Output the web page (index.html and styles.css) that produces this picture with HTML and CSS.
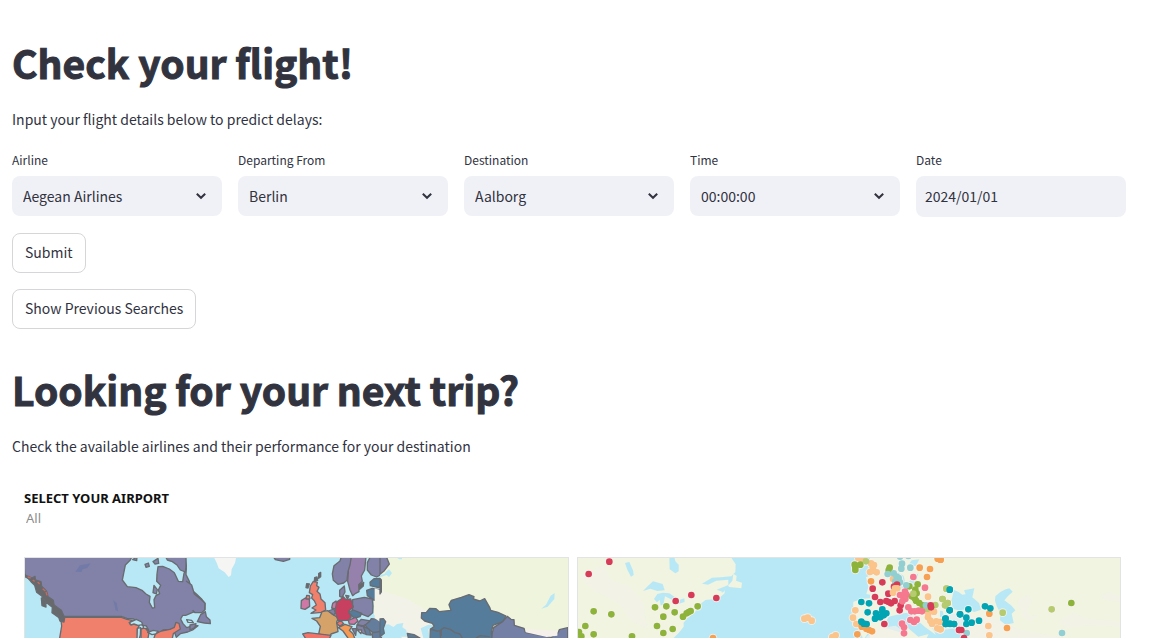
FILE: index.html
```html
<!DOCTYPE html>
<html lang="en">
<head>
<meta charset="utf-8">
<meta name="viewport" content="width=device-width, initial-scale=1">
<title>Check your flight!</title>
<link rel="stylesheet" href="styles.css">
</head>
<body>
<main class="page">
  <section class="block">
    <h1 class="title">Check your flight!</h1>
    <p class="lead">Input your flight details below to predict delays:</p>
    <form class="form">
      <div class="fields">
        <div class="field">
          <label class="label" for="airline">Airline</label>
          <div class="picker">
            <select class="control" id="airline"><option>Aegean Airlines</option></select>
            <svg class="chevron" viewBox="0 0 12 8" aria-hidden="true"><path d="M1.8 1.7 6 5.8l4.2-4.1"/></svg>
          </div>
        </div>
        <div class="field">
          <label class="label" for="from">Departing From</label>
          <div class="picker">
            <select class="control" id="from"><option>Berlin</option></select>
            <svg class="chevron" viewBox="0 0 12 8" aria-hidden="true"><path d="M1.8 1.7 6 5.8l4.2-4.1"/></svg>
          </div>
        </div>
        <div class="field">
          <label class="label" for="to">Destination</label>
          <div class="picker">
            <select class="control" id="to"><option>Aalborg</option></select>
            <svg class="chevron" viewBox="0 0 12 8" aria-hidden="true"><path d="M1.8 1.7 6 5.8l4.2-4.1"/></svg>
          </div>
        </div>
        <div class="field">
          <label class="label" for="time">Time</label>
          <div class="picker">
            <select class="control" id="time"><option>00:00:00</option></select>
            <svg class="chevron" viewBox="0 0 12 8" aria-hidden="true"><path d="M1.8 1.7 6 5.8l4.2-4.1"/></svg>
          </div>
        </div>
        <div class="field">
          <label class="label" for="date">Date</label>
          <input class="control control-date" id="date" type="text" value="2024/01/01">
        </div>
      </div>
      <button class="button" type="submit">Submit</button>
      <button class="button" type="button">Show Previous Searches</button>
    </form>
  </section>

  <section class="block">
    <h1 class="title">Looking for your next trip?</h1>
    <p class="lead">Check the available airlines and their performance for your destination</p>
    <div class="report">
      <div class="filter">
        <label class="filter-label" for="airport">SELECT YOUR AIRPORT</label>
        <select class="filter-select" id="airport"><option>All</option></select>
      </div>
      <div class="maps">
        <svg class="map map-regions" viewBox="75 24 1629 240" preserveAspectRatio="xMinYMin slice" role="img" aria-label="Countries map">
          <g class="shapes">
            <path class="violet" d="M70 15H558L556 25 559 48 558 74 568 94 575 120 590 133 604 146 615 160V179L600 181 578 187 557 196 548 196 542 207 549 221 560 233 577 228 594 227 578 240 563 246 541 251 529 262 521 240 515 238 489 240 478 251 463 252 446 243 437 232 421 221 401 207 381 205 364 199H190L181 183 165 169 158 160 149 153 139 136 122 112 104 94 91 88 75 80Z"/>
            <path class="coral" d="M188 202H364L381 208 397 211 388 218 390 222 408 224 418 226 412 238 413 270H178L185 228 183 211Z"/>
            <path class="coral" d="M423 270V237L434 233 447 248 443 270ZM460 270 466 252 484 243 510 238 523 232 528 217 537 220 541 237 527 246 520 251 516 270Z"/>
            <path class="water" d="M398 15 391 30 376 45 371 70 367 90 382 110 408 113 426 121 438 132 450 139 448 157 457 174 464 173 462 149 468 137 479 131 475 120 482 106 470 94 471 72 474 50 488 49 508 57 523 68 535 94 548 95 552 70 558 57 542 45 531 35 520 15Z"/>
            <path class="violet" d="M398 29 411 20 410 32ZM435 43 445 39 448 49 438 52ZM459 35 474 25 476 40 465 42ZM494 15 502 30 517 35 531 45 541 60 556 66 558 48 558 15ZM462 106 472 119 469 132 459 128Z"/>
            <path class="water" d="M388 218 409 208 425 216 428 224 414 226 402 222 393 225ZM429 226 439 228 446 240 439 235 431 235ZM412 235 422 233 421 255 417 270H411ZM443 247 460 241 475 244 467 252 456 254ZM560 209 575 211 580 218 564 217Z"/>
            <path class="rock" d="M76 75 96 84 105 79 106 90 123 95 125 109 140 124 144 140 160 151 162 165 184 181 194 203 192 216 180 213 176 202 156 188 157 172 137 156 126 139 110 127 104 106 93 95ZM124 144 137 154 138 171 126 167ZM170 191 188 204 181 211Z"/>
            <path class="spark" d="M83 81 92 84M98 90 104 94M113 96l6 6M128 116l8 7M138 126l3 10"/>
            <path class="lake" d="M226 65 240 46 272 40 262 54 248 58 244 66ZM339 150 350 158 355 185 346 180 344 167Z"/>
          </g>
          <g class="shapes" transform="translate(570)">
            <path class="violet" d="M22 215 32 194 46 185 49 200 60 210 61 221 43 219ZM0 225 18 221 14 233 0 240ZM250 20 256 29 280 34 299 28V20Z"/>
            <path class="violet-flat" d="M-12 93 5 105 13 132 35 150 45 160 44 180 35 188 15 188 8 181-12 184Z"/>
            <path class="rock-line" d="M-12 93 5 105 13 132 35 150 45 160 44 180 35 188 15 188 8 181"/>
            <path class="ice" d="M71 20 80 38 86 55 104 67 116 81 123 76 125 58 135 39 139 20Z"/>
            <path class="land" d="M598 25 588 55 575 82 574 97 568 130 552 140 552 194 570 203H1110V15H598Z"/>
            <path class="plum" d="M481 20 473 45 475 66 473 94 480 120 488 137 497 130 507 125 506 104 517 94 514 78 524 60 528 20Z"/>
            <path class="violet" d="M454 20 450 33 432 47 427 72 430 91 444 103 461 99 471 91 474 64 480 45 484 20ZM541 20 532 38 532 60 544 75 560 81 579 70 597 48 602 27 595 20Z"/>
            <path class="violet" d="M449 121 463 108 465 126 456 142 449 139ZM467 136l10 2-5 9Z"/>
            <path class="blue" d="M540 97 552 86 574 85 574 108 566 113 541 107ZM530 121 547 115 571 120 568 136 553 151 532 137Z"/>
            <path class="coral" d="M361 108 370 94 382 97 380 107 387 112 381 124 390 132 393 147 405 158 407 180 395 187 363 190 378 180 366 174 379 165 373 152 365 144 368 134 358 128Z"/>
            <path class="rose" d="M334 152 346 144 358 148 359 169 345 178 333 175Z"/>
            <path class="coral" d="M350 136 358 137 360 146 348 147Z"/>
            <path class="rock" d="M386 71 392 67 392 80 386 85ZM374 83 381 81 383 91 373 95ZM350 101 358 102 354 114 348 113ZM509 104 521 97 520 108 509 118Z"/>
            <path class="sand" d="M366 205 389 203 396 185 413 182 424 190 445 204 440 216 444 245 423 252 418 262 386 252 391 229 380 213Z"/>
            <path class="violet" d="M415 183 431 177 437 188 431 195ZM488 149 523 142 547 147 549 168 548 188 534 200 510 190 487 181Z"/>
            <path class="rose" d="M428 160 438 153 441 169 434 177 425 174Z"/>
            <path class="crimson" d="M440 156 451 149 460 140 468 149 482 147 490 171 476 184 484 201 475 211 445 212 440 201 435 184Z"/>
            <path class="blue" d="M476 186 490 180 515 190 510 200 492 205Z"/>
            <path class="rose" d="M475 211 497 202 504 213 493 223 478 222Z"/>
            <path class="red" d="M440 220 452 211 461 221 449 229ZM338 252 354 248 423 256 416 270H350Z"/>
            <path class="orange" d="M445 233 465 223 486 230 478 241 489 251 496 270H478L459 243Z"/>
            <path class="violet" d="M504 218 514 208 542 213 530 223 515 229 503 225ZM501 224 521 228 534 240 530 253 519 250 500 235 486 236 497 256Z"/>
            <path class="cream" d="M502 240 515 240 513 251Z"/>
            <path class="slate" d="M537 216 544 206 573 209 586 226 580 243 550 248 534 236 525 225ZM520 230 537 237 543 255 529 254ZM546 247 580 244 573 266 548 265Z"/>
            <path class="coast" d="M580 61 592 50 608 61V79H590Z"/>
          </g>
          <g class="shapes" transform="translate(1140)">
            <path class="land" d="M0 20H570V270H140L125 262 100 252 83 233 68 218 28 221 12 203 0 210Z"/>
            <path class="land-warm" d="M-16 115 85 148 120 170 170 200 198 270H75L0 215-16 205Z"/>
            <path class="sea" d="M0 226 26 223 40 231 51 222 70 219 67 232 78 239 82 253 110 260H0ZM122 235 145 224 163 224 159 233 145 238 149 264H130ZM18 65 27 58 36 69 27 81 20 75 0 82V75L13 72ZM52 24H66V28H58ZM484 176 498 164 512 137 524 129 523 147 503 170Z"/>
            <path class="violet" d="M0 20H19L28 42 13 62 0 73Z"/>
            <path class="blue" d="M0 85 4 90 4 126 0 132ZM0 207 10 206 17 215 10 235 13 250 0 260ZM82 250 102 254 120 264H85Z"/>
            <path class="blue" d="M125 188 139 187 149 175 168 176 178 185 213 181 207 164 214 151 244 142 267 134 282 140 280 147 299 153 314 146 329 172 332 181 354 187 378 198 369 215 339 226 334 247 338 270H150L151 238 163 229 157 220 134 213 124 204Z"/>
            <path class="rock-line" d="M151 237 171 243 180 242 182 265M178 243 192 233 211 238 225 248 240 252 249 268M184 239 183 258M280 270 300 257 329 260"/>
            <path class="indigo" d="M369 214 382 199 393 208 402 209 403 226 432 235 436 247 463 252 514 262 534 248 538 239 563 233V270H335L337 248 341 233Z"/>
            <path class="cream-flat" d="M436 237 500 240 533 243 532 257 500 261 437 247Z"/>
          </g>
        </svg>

        <svg class="map map-airports" viewBox="1734 24 1632 240" preserveAspectRatio="xMinYMin slice" role="img" aria-label="Airports map">
          <g transform="translate(1710)">
            <path class="haze" d="M30 80 100 45 120 90 180 110 220 160 230 235 180 210 150 160 70 120Z"/>
            <path class="sea" d="M482 20 497 43 496 66 484 79 451 82 426 83 396 101 414 104 439 92 475 89 475 105 440 119 457 125 446 142 430 148 406 150 385 167 375 187 354 202 341 218 341 230 326 249 305 270H900V20ZM165 39 178 36 189 61 191 75 183 80 172 59ZM298 20H313L316 34 326 44V64L316 70 299 58ZM219 123 236 106 249 94 278 102 284 121 262 123 241 116ZM252 147 262 132 278 128 298 130 311 139 327 150 343 145 344 156 326 161 300 146 285 139 280 165 272 166 269 149 261 157Z"/>
            <path class="land" d="M474 107 487 92 490 71 500 78 498 92 516 98 514 115 478 111ZM443 134 460 126 464 121 464 130 451 141Z"/>
          </g>
          <g transform="translate(2280)">
            <path class="land" d="M310 270 300 240 278 220 280 155 310 146 330 145 334 135 319 132 325 111 318 82 335 74 352 98 370 102 396 88 406 63 429 26 640 20H1090V270H500L490 238 465 200 448 205 420 180 370 225 330 240Z"/>
            <path class="sea" d="M405 80 413 66 431 78 437 104 455 88 475 70 464 115 438 112 421 132 402 122ZM430 190 460 187 494 215 515 250 475 260 440 230 430 250 370 232 386 200ZM545 185 610 195 610 264H500L515 235 552 230ZM442 50 455 31 478 28 468 47Z"/>
            <path class="land" d="M448 190 469 188 510 221 528 255 495 231 465 205ZM510 178 555 178 565 235 536 240 513 215Z"/>
            <path class="haze" d="M320 260 345 236 407 227 425 240 418 270H315Z"/>
          </g>
          <g transform="translate(2820)">
            <path class="haze" d="M234 148 267 135 275 156 260 180 269 199 293 196 275 214 249 202 249 183 233 170ZM355 213 405 188 430 204 460 208 541 215V230L440 225 380 236ZM482 138 510 126 541 142V155L495 150Z"/>
            <path class="haze" d="M0 192 55 183 120 198 170 208 230 238 400 270H0Z"/>
            <path class="sea" d="M34 153 42 120 56 126 67 134 77 133 72 121 103 115 97 142 117 159 123 179 103 186 82 178 55 181 39 177ZM166 139 180 127 197 118 208 115 218 125 204 138 193 151 213 166 226 181 215 191 221 219 197 224 180 211 181 189 171 170 165 153ZM0 242 36 236 68 243 61 264H0ZM0 182 8 183 12 199 0 201Z"/>
          </g>
          <g id="dots"></g>
        </svg>
      </div>
    </div>
  </section>
</main>
<script src="map.js"></script>
</body>
</html>
```
FILE: styles.css
```css
* { box-sizing: border-box; }

body {
  margin: 0;
  background: #fff;
  color: #31333f;
  font-family: "Noto Sans CJK SC", "Open Sans", sans-serif;
  font-size: 14px;
  line-height: 24px;
}

.page { padding: 34px 24px 0 12px; }
.block + .block { padding-top: 32px; }

.title {
  margin: 0 0 17px;
  font-size: 39px;
  line-height: 56px;
  font-weight: 700;
  -webkit-text-stroke: 1px #31333f;
}

.lead { margin: 0; }

.form {
  display: flex;
  flex-direction: column;
  align-items: flex-start;
  gap: 16px;
  padding-top: 17px;
}

.fields {
  display: grid;
  grid-template-columns: repeat(5, minmax(0, 1fr));
  gap: 16px;
  width: 100%;
}

.label {
  display: block;
  margin-bottom: 4px;
  font-size: 12px;
  line-height: 24px;
}

.picker { position: relative; }

.control {
  display: block;
  width: 100%;
  height: 40px;
  padding: 0 32px 0 11px;
  border: 0;
  border-radius: 8px;
  background: #f0f1f6;
  color: inherit;
  font: inherit;
  appearance: none;
}

.control-date { height: 41px; padding: 0 9px 2px; }

.chevron {
  position: absolute;
  top: 16px;
  right: 15px;
  width: 12px;
  height: 8px;
  fill: none;
  stroke: #31333f;
  stroke-width: 2;
  pointer-events: none;
}

.button {
  height: 40px;
  padding: 0 12px 2px;
  border: 1px solid #d6d6d9;
  border-radius: 8px;
  background: #fff;
  color: inherit;
  font: inherit;
}

.report { padding: 31px 5px 0 12px; }

.filter {
  display: flex;
  flex-direction: column;
  align-items: flex-start;
  font-family: "Noto Sans", sans-serif;
}

.filter-label {
  color: #111;
  font-size: 13px;
  line-height: 19px;
  font-weight: 700;
}

.filter-select {
  height: 20px;
  padding: 0 2px;
  border: 0;
  background: none;
  color: #8c8c8c;
  font: inherit;
  font-size: 13px;
  line-height: 20px;
  appearance: none;
}

.maps {
  display: grid;
  grid-template-columns: repeat(2, minmax(0, 1fr));
  gap: 8px;
  padding-top: 29px;
}

.map {
  display: block;
  width: 100%;
  height: 81px;
  border: 1px solid #e2e4e4;
  border-bottom: 0;
}

.map-regions { background: #b8e8f5; }
.map-airports { background: #f0f4e1; }

.shapes path { stroke: #686b70; stroke-width: 4; stroke-linejoin: round; }
.shapes .water { fill: #b8e8f5; }
.shapes .violet { fill: #8282a8; }
.shapes .violet-flat { fill: #8282a8; stroke: none; }
.shapes .plum { fill: #9681ac; }
.shapes .indigo { fill: #7480a6; }
.shapes .blue { fill: #557c9b; }
.shapes .slate { fill: #647d9d; }
.shapes .coral { fill: #f0806c; }
.shapes .red { fill: #f47368; }
.shapes .rose { fill: #ce78a5; }
.shapes .crimson { fill: #c7405f; }
.shapes .sand { fill: #d5a369; }
.shapes .orange { fill: #f59a55; }
.shapes .cream { fill: #f0eee5; }
.shapes .rock { fill: #68696c; }
.shapes .rock-line { fill: none; }
.shapes .spark { fill: none; stroke: #c9685a; }
.shapes .lake { fill: #727ba8; stroke: none; }
.shapes .ice { fill: #f5f5f3; stroke: none; }
.shapes .cream-flat { fill: #f5f0ea; stroke: none; }
.shapes .coast, .shapes .sea { fill: #b8e8f5; stroke: none; }
.shapes .land { fill: #eff4dd; stroke: none; }
.shapes .land-warm { fill: #f3f2e8; stroke: none; }

.sea { fill: #b8e8f5; }
.land { fill: #f0f4e1; }
.haze { fill: #f4f1ea; opacity: 0.7; }

.halo { fill: #f8f3ee; opacity: 0.8; }
.dot-red { fill: #d63c58; }
.dot-green { fill: #8db33b; }
.dot-lime { fill: #b6ca70; }
.dot-teal { fill: #00a4b3; }
.dot-aqua { fill: #91cfd0; }
.dot-pink { fill: #f5788f; }
.dot-peach { fill: #fac48b; }
.dot-orange { fill: #f6a052; }
```
FILE: map.js
```js
// Airports as [colour, x offset, list of x/y pairs].
const airports = [
  ["red", 1710, [118,35, 56,72, 364,135, 317,153, 439,144]],
  ["green", 1710, [71,184, 124,193, 46,228, 27,246, 34,259, 71,253, 186,259, 255,172, 289,169, 383,169, 314,187, 280,200, 339,200, 350,190, 356,186, 362,183, 261,228, 308,237, 280,249]],
  ["orange", 1710, [429,264]],
  ["peach", 2280, [133,206, 143,203, 155,212, 217,261, 227,256, 295,24, 305,27, 333,40, 338,50, 342,45, 330,66, 340,62, 350,67, 399,87, 286,181, 279,203, 289,222, 504,140, 505,190, 504,202, 511,212, 516,221, 522,185, 529,214, 542,216, 532,235, 542,238]],
  ["green", 2280, [284,44, 286,52, 286,60, 301,44, 389,53, 386,60, 448,109, 473,103, 466,119, 470,130, 455,139, 464,145, 468,152, 478,159, 488,166]],
  ["lime", 2280, [318,34, 460,131, 560,116, 547,147, 563,159, 555,166, 501,176, 526,165]],
  ["aqua", 2280, [420,20, 445,18, 426,41, 424,56, 451,53, 383,72, 401,70, 410,80, 416,84, 406,95, 420,97, 439,106, 498,166]],
  ["orange", 2280, [333,94, 479,53, 510,57, 501,81, 533,26, 541,29, 305,230, 319,236, 327,240, 336,244, 292,253]],
  ["red", 2280, [367,97, 338,116, 345,141, 361,156, 379,153, 386,156, 393,160, 404,153, 385,131, 402,110, 411,104, 422,166, 419,181, 373,222, 512,166, 513,172, 598,240]],
  ["pink", 2280, [460,81, 495,113, 435,125, 420,135, 430,140, 439,134, 436,147, 427,154, 445,172, 454,184, 464,184, 476,182, 486,184, 451,210, 462,216, 470,209, 426,221, 432,232, 432,250]],
  ["peach", 2280, [399,128, 405,115, 412,115]],
  ["teal", 2280, [304,156, 327,160, 323,187, 367,178, 348,190, 345,206, 354,201, 361,202, 371,196, 379,190, 367,187, 304,215, 311,221, 320,222, 569,119, 569,181, 557,206, 557,222, 570,221, 582,222, 600,193]],
  ["orange", 2820, [2,29, 148,191, 201,234]],
  ["lime", 2820, [19,116, 8,147, 23,159, 16,166, 188,188, 335,178]],
  ["green", 2820, [394,159]],
  ["aqua", 2820, [80,249, 366,249]],
  ["peach", 2820, [145,228, 148,256, 0,216, 0,238]],
  ["red", 2820, [57,240, 64,240, 72,264]],
  ["teal", 2820, [29,119, 29,181, 85,178, 135,169, 151,175, 60,193, 79,203, 16,206, 17,222, 30,222, 42,222, 79,222, 95,218, 117,212]]
];

const layer = document.getElementById("dots");

function plot(className, radius, colour) {
  for (const [name, offset, points] of airports) {
    for (let i = 0; i < points.length; i += 2) {
      const dot = document.createElementNS("http://www.w3.org/2000/svg", "circle");
      dot.setAttribute("class", colour ? className + name : className);
      dot.setAttribute("cx", offset + points[i]);
      dot.setAttribute("cy", points[i + 1]);
      dot.setAttribute("r", radius);
      layer.append(dot);
    }
  }
}

plot("halo", 13, false);
plot("dot-", 10, true);
```
